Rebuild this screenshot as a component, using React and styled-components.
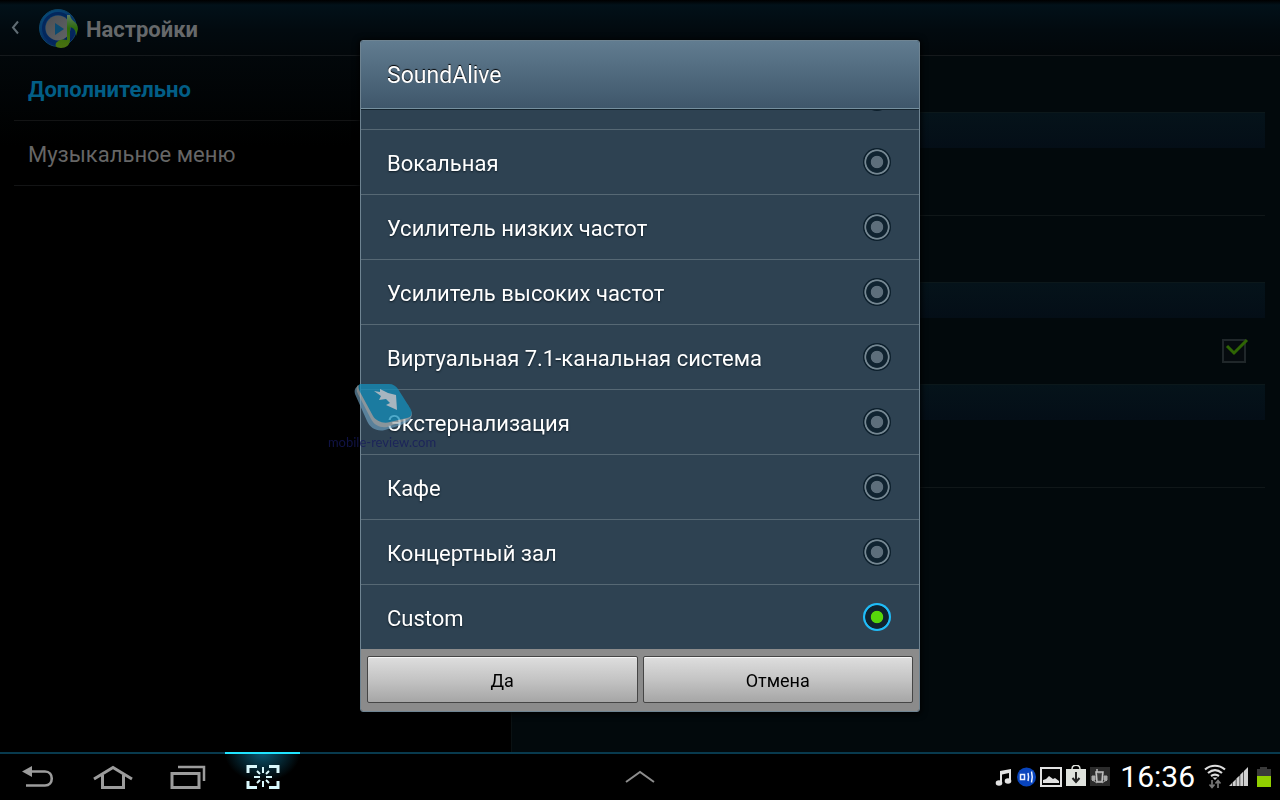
import React, { useState } from "react";
import styled, { createGlobalStyle, css } from "styled-components";

const GlobalStyle = createGlobalStyle`
  *, *::before, *::after { box-sizing: border-box; }
  body {
    margin: 0;
    background: #000;
    font-family: Roboto, "Noto Sans", sans-serif;
  }
  button { font-family: inherit; }
`;

const Screen = styled.div`
  min-height: 100vh;
  display: flex;
  flex-direction: column;
  background: #000;
  overflow: hidden;
`;

const ActionBar = styled.header`
  height: 56px;
  flex: none;
  display: flex;
  align-items: center;
  padding: 2px 0 0 10px;
  border-bottom: 1px solid #15191c;
  background: linear-gradient(#000 0, #021119 5px, #020a0f 30px, #02070a 100%);
`;

const BackButton = styled.button`
  width: 28px;
  height: 40px;
  padding: 0;
  border: 0;
  background: none;
  text-align: left;
`;

const AppTitle = styled.h1`
  margin: 2px 0 0 8px;
  font-size: 22px;
  line-height: 28px;
  font-weight: 700;
  color: #66696b;
`;

const Panes = styled.div`
  flex: 1;
  display: grid;
  grid-template-columns: 2fr 3fr;
`;

const SideMenu = styled.nav`
  padding-left: 14px;
  border-right: 1px solid #0a1113;
  background: linear-gradient(#02070a, #000 90px);
`;

const SideLink = styled.a`
  display: flex;
  align-items: center;
  height: 65px;
  padding: 3px 14px 0;
  border-bottom: 1px solid #131415;
  font-size: 22px;
  line-height: 28px;
  text-decoration: none;
  color: ${(p) => (p.$active ? "#025e86" : "#666")};
  font-weight: ${(p) => (p.$active ? 700 : 400)};
`;

const Details = styled.main`
  padding: 56px 15px 0 14px;
  background: #02090c;
`;

const SectionBar = styled.div`
  height: 36px;
  border-top: 1px solid #0c181b;
  background: linear-gradient(#05131a, #040e17);
`;

const SettingRow = styled.div`
  height: ${(p) => (p.$line ? 68 : 66)}px;
  display: flex;
  align-items: center;
  justify-content: flex-end;
  padding-right: 16px;
  border-bottom: 1px solid ${(p) => (p.$line ? "#101719" : "transparent")};
`;

const CheckLabel = styled.label`
  position: relative;
  width: 28px;
  height: 26px;
  display: block;

  input {
    appearance: none;
    display: block;
    width: 24px;
    height: 24px;
    margin: 1px 0 0 1px;
    border: 2px solid #20272a;
    background: #060b0f;
  }
  svg {
    position: absolute;
    left: 4px;
    top: 0;
  }
`;

const Overlay = styled.div`
  position: fixed;
  inset: 0 0 48px;
  display: flex;
  align-items: center;
  justify-content: center;
`;

const Dialog = styled.section`
  position: relative;
  width: 560px;
  max-width: 96vw;
  border: 1px solid #6f8492;
  border-radius: 3px;
  background: #2e4252;
  box-shadow: 0 1px 6px 1px #000;
`;

const DialogTitle = styled.h2`
  display: flex;
  align-items: center;
  height: 69px;
  margin: 0;
  padding: 2px 26px 0;
  border-bottom: 1px solid #14242e;
  box-shadow: inset 0 -1px #76909f;
  border-radius: 2px 2px 0 0;
  background: linear-gradient(#617c90, #3e566a);
  color: #fff;
  font-size: 23px;
  line-height: 28px;
  font-weight: 400;
  text-shadow: 0 -1px 1px #000;
`;

const OptionList = styled.div`
  height: 539px;
  overflow: hidden;
  display: flex;
  flex-direction: column;
  justify-content: flex-end;
`;

const Option = styled.label`
  flex: none;
  height: 65px;
  display: flex;
  align-items: center;
  justify-content: space-between;
  padding: 0 28px 0 26px;
  border-bottom: 1px solid #566874;
  color: #fff;
  font-size: 22px;
  line-height: 28px;
  text-shadow: 0 1px 2px #0d1a24;

  &:last-child {
    height: 64px;
    border-bottom: 0;
  }
  span { padding-top: 3px; }
`;

const Radio = styled.input`
  appearance: none;
  flex: none;
  width: 28px;
  height: 28px;
  margin: 0;
  border-radius: 50%;
  background: radial-gradient(circle, #5d6e7b 0 5.8px, #102330 6.6px 10.4px, #758792 11.2px 12.2px, #0b1e2b 13px);

  &:checked {
    background: radial-gradient(circle, #57d60b 0 5.8px, #102330 6.6px 11.4px, #1fbcf8 12.2px);
  }
`;

const DialogActions = styled.footer`
  display: flex;
  gap: 5px;
  padding: 7px 6px 8px;
  background: #8b8b8b;
  border-radius: 0 0 2px 2px;
`;

const ActionButton = styled.button`
  flex: 1;
  height: 47px;
  padding: 2px 0 0;
  border: 1px solid #454545;
  border-radius: 2px;
  background: linear-gradient(#dedede, #c4c4c4 50%, #a6a6a6);
  box-shadow: inset 0 1px #f6f6f6;
  color: #000;
  font-size: 18px;
  line-height: 24px;
`;

const Watermark = styled.div`
  position: absolute;
  left: -31px;
  top: 343px;
  width: 104px;
  display: flex;
  flex-direction: column;
  align-items: center;
  pointer-events: none;
  opacity: 0.75;
  white-space: nowrap;
  font-family: Lato, sans-serif;
  font-size: 13px;
  line-height: 12px;
  color: #161a5c;

  svg { margin-left: 4px; }
`;

const SystemBar = styled.footer`
  flex: none;
  height: 48px;
  display: grid;
  grid-template-columns: 1fr auto 1fr;
  border-top: 2px solid #083a4e;
  background: #000;
`;

const NavKeys = styled.div`
  display: flex;
`;

const NavKey = styled.button`
  width: 75px;
  height: 48px;
  margin-top: -2px;
  padding: 2px 0 0;
  border: 0;
  display: flex;
  align-items: center;
  justify-content: center;
  background: none;
  ${(p) =>
    p.$active &&
    css`
      box-shadow: inset 0 2px #20e4ff;
      background: radial-gradient(ellipse 38px 30px at 50% 0, #0b5873, #000);
    `}
`;

const Status = styled.div`
  display: flex;
  align-items: center;
  justify-content: flex-end;
  padding-right: 9px;
  gap: 2px;
`;

const Notifications = styled.div`
  display: flex;
  align-items: center;
  gap: 3px;
`;

const Clock = styled.time`
  margin: 0 6px 0 8px;
  font-size: 30px;
  line-height: 36px;
  color: #fff;
`;

const AppIcon = () => (
  <svg width="40" height="40" viewBox="0 0 40 40" aria-hidden="true">
    <defs>
      <linearGradient id="disc" x1="0" y1="0" x2="0.6" y2="1">
        <stop offset="0" stopColor="#07507c" />
        <stop offset="1" stopColor="#061e5a" />
      </linearGradient>
      <linearGradient id="face" x1="0" y1="0" x2="1" y2="1">
        <stop offset="0" stopColor="#4b4e52" />
        <stop offset="1" stopColor="#626467" />
      </linearGradient>
      <linearGradient id="note" x1="0" y1="0" x2="0" y2="1">
        <stop offset="0" stopColor="#5e7a62" />
        <stop offset="0.4" stopColor="#2c6b0b" />
        <stop offset="1" stopColor="#4b7110" />
      </linearGradient>
    </defs>
    <circle cx="20" cy="19" r="18.500" fill="url(#disc)" stroke="#0c4468" />
    <circle cx="20" cy="19" r="14.500" fill="none" stroke="#03275c" strokeWidth="3" />
    <circle cx="20" cy="19" r="12.500" fill="url(#face)" />
    <path d="M17 14v12l9-6z" fill="#0b4a70" />
    <path d="M29 6h3c1 7 8 6 8 14l-2 7c0-6-2-8-6-9v13c0 5-4 8-9 8s-7-3-4-6 6-3 10-2z" fill="url(#note)" />
  </svg>
);

const MarkIcon = () => (
  <svg width="60" height="52" viewBox="0 0 60 52" aria-hidden="true">
    <path d="M4 2C1 4 0 6 1 10l12 27c3 7 10 11 18 9l16-5c7-3 12-6 10-11L54 21z" fill="#77abcc" opacity=".8" />
    <path d="M4 1C2 3 2 6 4 10l13 25c3 6 9 9 16 8l20-7c4-2 6-5 4-9z" fill="#a9b1b4" />
    <path d="M6 0h29c4 0 7 2 9 5l12 19c3 5 2 9-3 10l-17 4c-7 2-14-1-17-6L6 8C4 4 4 1 6 0z" fill="#158eba" />
    <path d="M20 7l6 1 0-3 8 4 8 2 1 15-11-5 4-2-4-4-7 1 2-4z" fill="#d0dce4" />
  </svg>
);

const BackKeyIcon = () => (
  <svg width="34" height="24" viewBox="0 0 34 24" fill="none" aria-hidden="true">
    <path d="M10 6.500h14c9 0 9 14 0 14H5" stroke="#9c9c9c" strokeWidth="2.600" />
    <path d="M1 6.500L11 1v11z" fill="#9c9c9c" />
  </svg>
);

const HomeKeyIcon = () => (
  <svg width="40" height="24" viewBox="0 0 40 24" fill="none" stroke="#9c9c9c" aria-hidden="true">
    <path d="M1 14L20 2.500 39 14" strokeWidth="3" />
    <path d="M9.500 10v12.500h21V10" strokeWidth="3" />
  </svg>
);

const RecentKeyIcon = () => (
  <svg width="36" height="24" viewBox="0 0 36 24" fill="none" stroke="#9c9c9c" strokeWidth="3" aria-hidden="true">
    <path d="M2 8.500h27v14H2z" />
    <path d="M8 2h26v14" strokeWidth="2.500" />
  </svg>
);

const CaptureIcon = () => (
  <svg width="34" height="26" viewBox="0 0 34 26" fill="none" stroke="#d9f8fc" aria-hidden="true">
    <path d="M2 9V2.500h9M23 2.500h9V9M32 17v6.500h-9M11 23.500H2V17" strokeWidth="3" />
    <path d="M17 3v6M17 17v6M8 13h6M20 13h6M11 7l3 3M23 7l-3 3M11 19l3-3M23 19l-3-3" strokeWidth="2" />
  </svg>
);

const StatusIcons = () => (
  <Notifications>
    <svg width="18" height="20" viewBox="0 0 18 20" fill="#e2e2e2" aria-hidden="true">
      <path d="M5 4l11-2v12h-2V6L7 7.500V16H5z" />
      <ellipse cx="4" cy="16" rx="3.300" ry="2.700" />
      <ellipse cx="13" cy="14" rx="3.300" ry="2.700" />
    </svg>
    <svg width="21" height="20" viewBox="0 0 21 20" fill="none" aria-hidden="true">
      <circle cx="10.500" cy="10" r="9.500" fill="#0844bd" />
      <path d="M4.500 7.500h4v5h-4z" stroke="#e9efff" strokeWidth="1.500" />
      <path d="M12 6c.6 2 .6 6 0 8M15.500 4.500c.8 3 .8 8 0 11" stroke="#e9efff" strokeWidth="1.500" />
    </svg>
    <svg width="22" height="20" viewBox="0 0 22 20" aria-hidden="true">
      <path d="M1 1h20v18H1z" fill="#050505" stroke="#e2e2e2" strokeWidth="2" />
      <path d="M3 16v-3l3-1 3-3 4 3 2-1 4 3v2z" fill="#e2e2e2" />
    </svg>
    <svg width="22" height="24" viewBox="0 0 22 24" aria-hidden="true">
      <path d="M1 4h20v17H1z" fill="#dfe2dd" />
      <path d="M7 4c0-5 8-5 8 0" fill="none" stroke="#dfe2dd" strokeWidth="1.500" />
      <path d="M11 7v9M7.500 13l3.500 4 3.500-4" fill="none" stroke="#222" strokeWidth="2" />
    </svg>
    <svg width="20" height="20" viewBox="0 0 20 20" fill="none" aria-hidden="true">
      <path d="M0 0h20v19H0z" fill="#2b2b2b" />
      <path d="M7 2v4" stroke="#bbb" strokeWidth="1.500" />
      <path d="M6 5h7l-1 10H7z" fill="#555" stroke="#c4c4c4" strokeWidth="1.500" />
      <path d="M8 8h3M8 10h3M8 12h3" stroke="#222" />
      <path d="M2 9h3v4l-2 1-1-1zM17 9h-3v4l2 1 1-1zM4 14l3 2M15 14l-3 2" fill="#aaa" stroke="#aaa" />
    </svg>
  </Notifications>
);

const SignalIcons = () => (
  <>
    <svg width="24" height="26" viewBox="0 0 24 26" fill="none" aria-hidden="true">
      <path d="M2 5.500c6-5 14-5 20 0M5 9c5-4 9-4 14 0M8 12c3-2 5-2 8 0" stroke="#dedede" strokeWidth="2.200" />
      <path d="M9.500 13.500h5L12 16z" fill="#dedede" />
      <path d="M9 16v7M6.500 20.500L9 23.500l2.500-3M15 24v-7M12.500 19.500l2.500-3 2.500 3" stroke="#777" strokeWidth="1.700" />
    </svg>
    <svg width="20" height="20" viewBox="0 0 20 20" fill="#d0d0d0" aria-hidden="true">
      <path d="M0 19l3-3v3zM3.600 15.400l3.200-3.200V19H3.600zM7.400 11.600l3.200-3.200V19H7.400zM11.200 7.800l3.200-3.200V19h-3.200zM15 4l4-4v19h-4z" />
    </svg>
    <svg width="20" height="22" viewBox="0 0 20 22" aria-hidden="true">
      <path d="M6 3h3V1h7v2h4v7H6z" fill="#3a3a3a" />
      <path d="M6 10h14v11H6z" fill="#91cf00" />
    </svg>
  </>
);

const MODES = [
  "Вокальная",
  "Усилитель низких частот",
  "Усилитель высоких частот",
  "Виртуальная 7.1-канальная система",
  "Экстернализация",
  "Кафе",
  "Концертный зал",
  "Custom",
];

export default function App() {
  const [mode, setMode] = useState("Custom");

  return (
    <>
      <GlobalStyle />
      <Screen>
        <ActionBar>
          <BackButton aria-label="Назад">
            <svg width="10" height="16" viewBox="0 0 10 16" fill="none" aria-hidden="true">
              <path d="M8 2.500L3 8.500l5 6" stroke="#606c73" strokeWidth="2" />
            </svg>
          </BackButton>
          <AppIcon />
          <AppTitle>Настройки</AppTitle>
        </ActionBar>
        <Panes>
          <SideMenu>
            <SideLink href="#extra" $active>Дополнительно</SideLink>
            <SideLink href="#music">Музыкальное меню</SideLink>
          </SideMenu>
          <Details>
            <SectionBar />
            <SettingRow $line />
            <SettingRow />
            <SectionBar />
            <SettingRow>
              <CheckLabel>
                <input type="checkbox" defaultChecked aria-label="Дополнительно" />
                <svg width="24" height="20" viewBox="0 0 24 20" fill="none" aria-hidden="true">
                  <path d="M2 8l7 7L22 2" stroke="#2f6504" strokeWidth="3" />
                </svg>
              </CheckLabel>
            </SettingRow>
            <SectionBar />
            <SettingRow $line />
          </Details>
        </Panes>
        <SystemBar>
          <NavKeys>
            <NavKey aria-label="Назад"><BackKeyIcon /></NavKey>
            <NavKey aria-label="Домой"><HomeKeyIcon /></NavKey>
            <NavKey aria-label="Недавние"><RecentKeyIcon /></NavKey>
            <NavKey $active aria-label="Снимок экрана"><CaptureIcon /></NavKey>
          </NavKeys>
          <NavKey aria-label="Развернуть">
            <svg width="30" height="14" viewBox="0 0 30 14" fill="none" aria-hidden="true">
              <path d="M1 12L15 2l14 10" stroke="#8d8d8d" strokeWidth="2" />
            </svg>
          </NavKey>
          <Status>
            <StatusIcons />
            <Clock>16:36</Clock>
            <SignalIcons />
          </Status>
        </SystemBar>
      </Screen>
      <Overlay>
        <Dialog role="dialog" aria-labelledby="dialog-title">
          <DialogTitle id="dialog-title">SoundAlive</DialogTitle>
          <OptionList role="radiogroup" aria-labelledby="dialog-title">
            <Option>
              <span />
              <Radio type="radio" name="mode" aria-label="SoundAlive" />
            </Option>
            {MODES.map((name) => (
              <Option key={name}>
                <span>{name}</span>
                <Radio
                  type="radio"
                  name="mode"
                  checked={mode === name}
                  onChange={() => setMode(name)}
                />
              </Option>
            ))}
          </OptionList>
          <DialogActions>
            <ActionButton>Да</ActionButton>
            <ActionButton>Отмена</ActionButton>
          </DialogActions>
          <Watermark>
            <MarkIcon />
            <span>mobile-review.com</span>
          </Watermark>
        </Dialog>
      </Overlay>
    </>
  );
}
